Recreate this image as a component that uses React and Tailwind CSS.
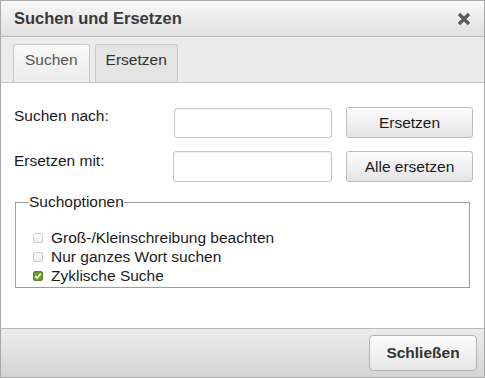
import React from "react";

const Checkbox = ({ checked }) =>
  checked ? (
    <span className="w-[10px] h-[10px] rounded-[2px] bg-[#6a9e2a] border border-[#5a8a20] flex items-center justify-center">
      <svg width="8" height="8" viewBox="0 0 8 8">
        <path d="M1.2 4.2 L3.2 6 L6.8 1.8" fill="none" stroke="#fff" strokeWidth="1.6" />
      </svg>
    </span>
  ) : (
    <span className="w-[10px] h-[10px] rounded-[2px] border border-[#cfcfcf] bg-gradient-to-b from-[#ffffff] to-[#ececec]" />
  );

export default function App() {
  const options = [
    { label: "Groß-/Kleinschreibung beachten", checked: false },
    { label: "Nur ganzes Wort suchen", checked: false },
    { label: "Zyklische Suche", checked: true },
  ];

  return (
    <div className="w-[485px] h-[378px] border border-[#a9a9a9] flex flex-col bg-white font-['Liberation_Sans',Arial,sans-serif] text-[15.5px] text-[#1a1a1a]">
      {/* Title bar */}
      <div className="h-[36px] shrink-0 flex items-center justify-between pl-[13px] pr-[13px] bg-gradient-to-b from-[#f8f8f8] to-[#e0e0e0] border-b border-[#b8b8b8]">
        <span className="font-bold text-[16.5px] text-[#3a3a3a]">Suchen und Ersetzen</span>
        <svg width="14" height="14" viewBox="0 0 14 14">
          <path d="M2 2 L12 12 M12 2 L2 12" stroke="#5a5a5a" strokeWidth="3.4" />
        </svg>
      </div>

      {/* Tabs */}
      <div className="shrink-0 flex items-end gap-[5px] pl-[12px] pt-[7px] bg-[#ebebeb] border-b border-[#c6c6c6]">
        <div className="h-[38px] px-[11px] pt-[6px] leading-[18px] rounded-t-[3px] border border-b-0 border-[#c8c8c8] bg-gradient-to-b from-[#f9f9f9] to-[#ececec] text-[#555]">
          Suchen
        </div>
        <div className="h-[38px] px-[10px] pt-[6px] leading-[18px] rounded-t-[3px] border border-b-0 border-[#c8c8c8] bg-[#e4e4e4] text-[#333]">
          Ersetzen
        </div>
      </div>

      {/* Content */}
      <div className="flex-1 bg-white pl-[13px] pr-[12px] pt-[24px]">
        <div className="grid grid-cols-[146px_158px_127px] gap-x-[14px] gap-y-[13px] items-start">
          <span className="leading-[18px]">Suchen nach:</span>
          <div className="h-[30px] mt-[1px] rounded-[3px] border border-[#c6c6c6] bg-white shadow-[inset_0_1px_2px_rgba(0,0,0,0.06)]" />
          <button className="h-[31px] rounded-[3px] border border-[#bcbcbc] bg-gradient-to-b from-[#fdfdfd] to-[#e4e4e4] text-[#1a1a1a]">
            Ersetzen
          </button>
          <span className="leading-[18px] mt-[1px]">Ersetzen mit:</span>
          <div className="h-[31px] -ml-[1px] rounded-[3px] border border-[#c6c6c6] bg-white shadow-[inset_0_1px_2px_rgba(0,0,0,0.06)]" />
          <button className="h-[31px] rounded-[3px] border border-[#bcbcbc] bg-gradient-to-b from-[#fdfdfd] to-[#e4e4e4] text-[#1a1a1a]">
            Alle ersetzen
          </button>
        </div>

        <fieldset className="mt-[11px] ml-[1px] w-[455px] h-[95px] border border-[#9d9d9d] px-[13px] pt-[17px]">
          <legend className="px-0 leading-[18px]">Suchoptionen</legend>
          <div className="flex flex-col pl-[4px]">
            {options.map((o) => (
              <label key={o.label} className="flex items-center gap-[8px] leading-[19px]">
                <Checkbox checked={o.checked} />
                <span>{o.label}</span>
              </label>
            ))}
          </div>
        </fieldset>
      </div>

      {/* Footer */}
      <div className="h-[49px] shrink-0 flex items-center justify-end pr-[7px] border-t border-[#bababa] bg-gradient-to-b from-[#ececec] to-[#d4d4d4]">
        <button className="w-[108px] h-[36px] rounded-[4px] border border-[#b3b3b3] bg-gradient-to-b from-[#fdfdfd] to-[#e6e6e6] font-bold text-[#333]">
          Schließen
        </button>
      </div>
    </div>
  );
}
